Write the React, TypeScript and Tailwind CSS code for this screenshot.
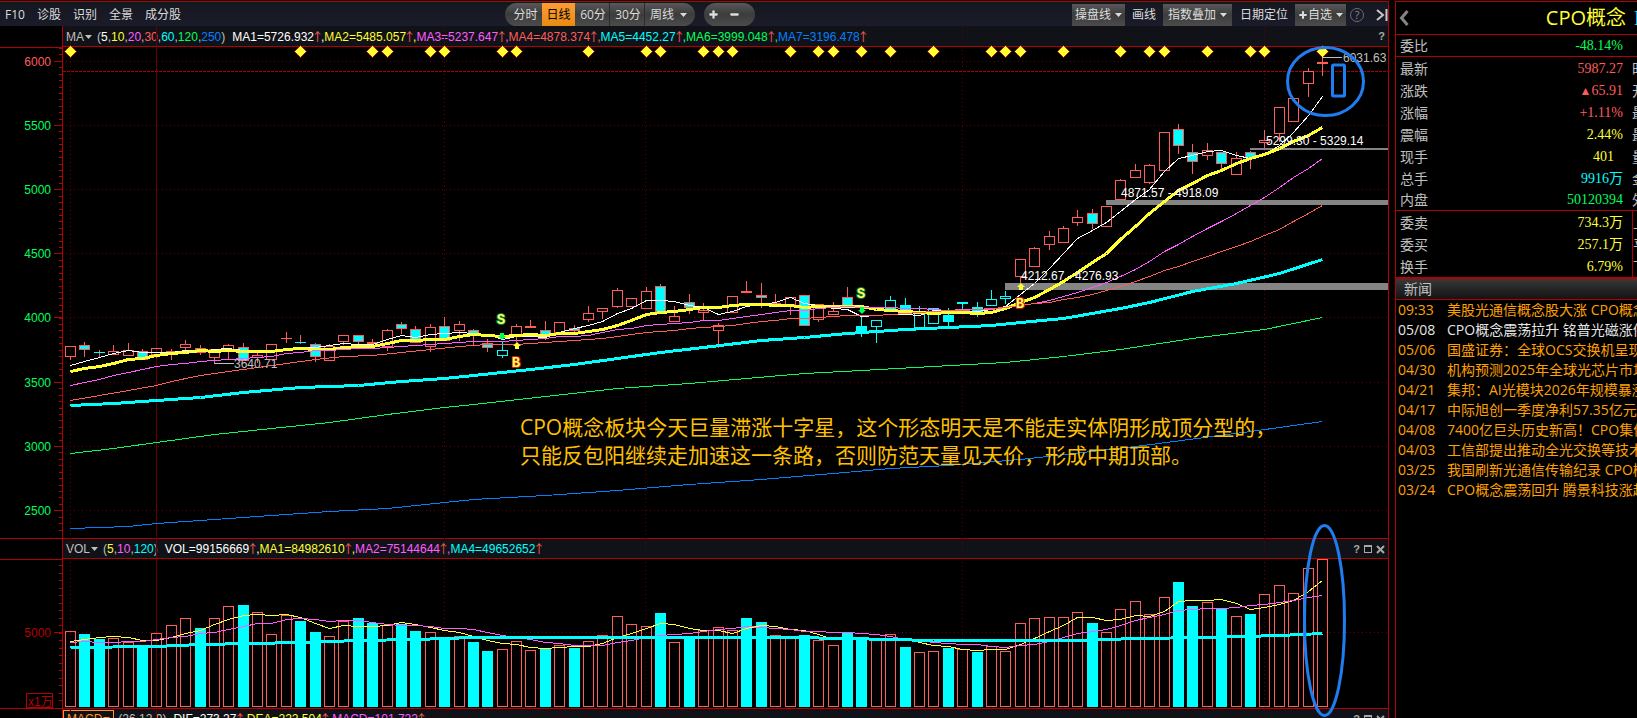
import React from "react";
import { Minus, Plus } from "lucide-react";

// kind: u = hollow red, d = filled cyan with red edge, c = solid cyan, h = hollow cyan
// [kind, body top, body bottom, high, low, volume top, volume filled]
type Candle = [string, number, number, number, number, number, number];

const candles: Candle[] = [
  ["u", 346, 356, 346, 359, 631, 0],
  ["d", 345, 349, 342, 356, 634, 1],
  ["d", 352, 352, 350, 357, 639, 1],
  ["u", 351, 354, 345, 354, 638, 0],
  ["u", 350, 355, 343, 355, 642, 0],
  ["d", 351, 359, 349, 359, 646, 1],
  ["u", 348, 354, 348, 357, 633, 0],
  ["u", 351, 353, 349, 359, 625, 0],
  ["u", 344, 347, 340, 351, 618, 0],
  ["d", 348, 352, 345, 354, 628, 1],
  ["u", 349, 357, 349, 363, 618, 0],
  ["u", 345, 351, 344, 359, 606, 0],
  ["d", 347, 360, 343, 360, 605, 1],
  ["u", 355, 357, 350, 362, 612, 0],
  ["u", 344, 359, 344, 359, 634, 0],
  ["u", 338, 338, 332, 342, 615, 0],
  ["d", 342, 342, 335, 343, 621, 1],
  ["d", 344, 356, 343, 361, 632, 1],
  ["u", 346, 360, 344, 360, 636, 0],
  ["u", 335, 341, 335, 344, 621, 0],
  ["d", 335, 341, 335, 344, 618, 1],
  ["u", 342, 343, 339, 346, 623, 1],
  ["u", 330, 346, 329, 350, 625, 0],
  ["d", 324, 328, 322, 333, 624, 1],
  ["d", 329, 342, 326, 342, 631, 1],
  ["u", 327, 346, 324, 351, 632, 0],
  ["d", 326, 340, 317, 340, 637, 1],
  ["u", 324, 330, 321, 340, 636, 0],
  ["d", 330, 333, 329, 344, 642, 1],
  ["d", 343, 347, 339, 351, 651, 1],
  ["h", 350, 355, 341, 357, 649, 0],
  ["u", 326, 336, 324, 341, 641, 0],
  ["u", 326, 327, 320, 327, 650, 0],
  ["d", 330, 334, 321, 339, 648, 1],
  ["u", 322, 332, 322, 332, 645, 0],
  ["d", 328, 330, 325, 332, 648, 1],
  ["u", 313, 319, 306, 321, 641, 0],
  ["u", 308, 311, 308, 318, 635, 0],
  ["u", 290, 306, 288, 307, 616, 0],
  ["u", 298, 306, 298, 306, 624, 0],
  ["u", 291, 308, 287, 308, 626, 0],
  ["d", 286, 311, 284, 311, 613, 1],
  ["u", 316, 321, 306, 321, 642, 0],
  ["d", 302, 307, 294, 313, 637, 1],
  ["u", 310, 312, 303, 320, 630, 0],
  ["u", 325, 330, 323, 347, 627, 0],
  ["u", 296, 312, 296, 312, 630, 0],
  ["u", 291, 292, 281, 292, 618, 1],
  ["d", 295, 297, 283, 307, 622, 1],
  ["u", 303, 304, 294, 304, 635, 0],
  ["u", 297, 304, 297, 314, 638, 0],
  ["d", 295, 325, 295, 325, 635, 1],
  ["u", 304, 319, 304, 321, 640, 0],
  ["u", 311, 314, 302, 314, 645, 0],
  ["d", 297, 306, 287, 306, 633, 1],
  ["c", 326, 332, 315, 336, 638, 1],
  ["h", 320, 326, 320, 342, 640, 0],
  ["h", 300, 308, 296, 308, 634, 0],
  ["c", 305, 311, 298, 313, 647, 1],
  ["h", 311, 327, 306, 327, 652, 0],
  ["h", 308, 323, 308, 323, 651, 0],
  ["c", 315, 321, 308, 325, 648, 1],
  ["c", 302, 303, 302, 312, 649, 0],
  ["c", 307, 313, 302, 316, 652, 1],
  ["h", 299, 305, 290, 305, 646, 0],
  ["h", 296, 298, 291, 303, 651, 0],
  ["u", 259, 276, 259, 282, 623, 0],
  ["u", 248, 266, 247, 266, 618, 0],
  ["u", 236, 244, 231, 249, 617, 0],
  ["u", 228, 242, 226, 242, 617, 0],
  ["u", 217, 222, 210, 225, 612, 0],
  ["d", 213, 223, 209, 228, 623, 1],
  ["u", 206, 226, 206, 226, 632, 0],
  ["u", 180, 199, 179, 199, 609, 0],
  ["u", 170, 177, 164, 177, 601, 0],
  ["u", 165, 182, 164, 183, 614, 0],
  ["u", 132, 170, 132, 170, 597, 0],
  ["d", 129, 145, 124, 153, 582, 1],
  ["d", 152, 161, 144, 173, 606, 1],
  ["u", 150, 155, 143, 159, 602, 0],
  ["d", 152, 163, 152, 168, 609, 1],
  ["u", 158, 174, 152, 174, 616, 0],
  ["d", 152, 157, 151, 168, 614, 1],
  ["u", 140, 142, 130, 147, 594, 0],
  ["u", 107, 133, 107, 141, 585, 0],
  ["u", 98, 121, 98, 121, 593, 0],
  ["u", 71, 83, 68, 96, 568, 0],
  ["u", 62, 63, 46, 75, 559, 0],
];

const xAt = (i: number) => Math.round(70 + 14.39 * i);

const closes = candles.map((c) => (c[0] === "u" || c[0] === "h" ? c[1] : c[2]));
const volumes = candles.map((c) => c[5]);

const average = (values: number[], n: number, seed: number[]) =>
  values.map((_, i) =>
    i < seed.length
      ? seed[i]
      : values.slice(i - n + 1, i + 1).reduce((a, b) => a + b, 0) / n,
  );

const toPoints = (ys: number[], from = 0) =>
  ys.map((y, i) => `${xAt(i + from)},${Math.round(y)}`).join(" ");

const sparse = (pts: number[][]) =>
  pts.map(([i, y]) => `${xAt(i)},${Math.round(y)}`).join(" ");

const ma5 = toPoints(average(closes, 5, [365, 361, 357, 353]));
const ma10 = toPoints(
  average(closes, 10, [371, 368, 366, 363, 359, 358, 355, 353, 352]),
);
const ma20 = toPoints(
  average(closes, 20, [
    385, 382, 379, 375, 372, 369, 366, 364, 363, 361, 360, 359, 358, 357, 356,
    353, 352, 350, 350,
  ]),
);
const ma30 =
  sparse([
    [0, 400], [2, 395], [4, 390], [6, 385], [7, 381], [9, 375], [11, 371],
    [13, 367], [15, 363], [17, 359], [19, 356], [21, 355], [23, 352],
    [25, 349], [27, 346],
  ]) +
  " " +
  toPoints(average(closes, 30, closes.slice(0, 29)).slice(29), 29);
const ma60 = sparse([
  [0, 405], [3, 403], [6, 400], [9, 397], [12, 392], [16, 387], [20, 385],
  [23, 381], [26, 378], [28, 375], [32, 369], [35, 364], [38, 358], [41, 352],
  [44, 347], [48, 340], [51, 337], [54, 333], [58, 329], [61, 327], [64, 325],
  [66, 322], [69, 318], [73, 308], [75, 302], [78, 291], [81, 283], [84, 273],
  [87, 259],
]);
const ma120 = sparse([
  [0, 453], [3, 448], [6, 442], [10, 434], [14, 428], [18, 422], [22, 414],
  [26, 407], [28, 404], [33, 396], [38, 388], [43, 383], [47, 378], [51, 373],
  [55, 370], [60, 366], [65, 362], [69, 356], [73, 349], [78, 338], [83, 329],
  [87, 317],
]);
const ma250 = sparse([
  [0, 528], [4, 526], [6, 523], [10, 519], [14, 515], [18, 511], [22, 508],
  [26, 502], [28, 499], [33, 495], [38, 490], [43, 484], [48, 479], [53, 473],
  [57, 468], [61, 465], [66, 459], [74, 446], [82, 431], [87, 421],
]);
const vol5 = toPoints(average(volumes, 5, [641, 639, 637, 636]));
const vol10 = toPoints(
  average(volumes, 10, [642, 641, 642, 642, 641, 641, 639, 637, 636]),
);
const vol120 = sparse([
  [0, 647], [6, 646], [9, 644], [16, 642], [20, 640], [24, 639], [28, 637],
  [50, 637], [54, 638], [60, 640], [70, 640], [74, 638], [79, 637], [84, 635],
  [87, 633],
]);

const signals = [
  0, 16, 21, 22, 25, 26, 30, 31, 36, 40, 41, 44, 45, 46, 50, 52, 53, 55, 57,
  60, 64, 65, 66, 69, 73, 75, 76, 79, 82, 83, 87,
];

const range = (n: number) => Array.from({ length: n }, (_, i) => i);

const gridColumns = [70, 444, 645, 962, 1264];

const priceLabels = [
  { text: "6000", y: 61, up: true },
  { text: "5500", y: 125 },
  { text: "5000", y: 189 },
  { text: "4500", y: 253 },
  { text: "4000", y: 317 },
  { text: "3500", y: 382 },
  { text: "3000", y: 446 },
  { text: "2500", y: 510 },
];

const gaps = [
  { x: 1250, y: 148, h: 2, tx: 1266, ty: 145, text: "5299.30 - 5329.14" },
  { x: 1106, y: 200, h: 5, tx: 1121, ty: 197, text: "4871.57 - 4918.09" },
  { x: 1005, y: 283, h: 7, tx: 1021, ty: 280, text: "4212.67 - 4276.93" },
];

function Line({ points, color, width = 1 }: { points: string; color: string; width?: number }) {
  return (
    <polyline
      points={points}
      transform="translate(0.5 0.5)"
      fill="none"
      stroke={color}
      strokeWidth={width}
      shapeRendering="crispEdges"
    />
  );
}

function CandleShape({ candle, i }: { candle: Candle; i: number }) {
  const [kind, top, bottom, high, low] = candle;
  const x = xAt(i);
  const edge = kind === "u" || kind === "d" ? "#ff5c5c" : "#00ffff";
  const fill = kind === "d" || kind === "c" ? "#00ffff" : "none";
  const flat = bottom - top < 1;
  return (
    <g shapeRendering="crispEdges" stroke={edge}>
      {high < top && <path d={`M${x + 0.5} ${high}V${top}`} />}
      {low > bottom && <path d={`M${x + 0.5} ${bottom}V${low + 1}`} />}
      {flat ? (
        <path d={`M${x - 5} ${top + 0.5}H${x + 6}`} stroke={kind === "d" ? "#00ffff" : edge} />
      ) : (
        <rect x={x - 4.5} y={top + 0.5} width="10" height={bottom - top} fill={fill} />
      )}
    </g>
  );
}

function Mark({ x, y, letter }: { x: number; y: number; letter: string }) {
  const sell = letter === "S";
  return (
    <text
      x={x}
      y={y}
      textAnchor="middle"
      className="font-['Liberation_Mono',monospace] text-sm font-bold"
      fill="#ffff5c"
      stroke={sell ? "#00783c" : "#c81414"}
      strokeWidth="2"
      paintOrder="stroke"
    >
      {letter}
    </text>
  );
}

function Arrow({ x, y, up }: { x: number; y: number; up?: boolean }) {
  return up ? (
    <path d={`M${x} ${y}l4 4h-2v3h-4v-3h-2z`} fill="#ffff32" />
  ) : (
    <path d={`M${x} ${y + 7}l4 -4h-2v-3h-4v3h-2z`} fill="#00ff5c" />
  );
}

function PriceChart() {
  return (
    <svg
      viewBox="0 46 1389 492"
      className="relative block w-full overflow-visible font-['Liberation_Sans',Arial,sans-serif] text-xs"
    >
      <g shapeRendering="crispEdges" fill="none">
        <path d="M156.5 26V538" stroke="#640000" />
        {gridColumns.map((x) => (
          <path key={x} d={`M${x + 0.5} 26V538`} stroke="#640000" strokeDasharray="1 3" />
        ))}
        {priceLabels.map((l) => (
          <path key={l.y} d={`M66 ${l.y + 0.5}H1388`} stroke="#640000" strokeDasharray="1 3" />
        ))}
        <path d="M63 71.5H1388" stroke="#aa0000" strokeDasharray="3 1" />
        <path d="M62.5 26V538M63 46.5H1389M0 47.5H62M1388.5 2V538" stroke="#b40000" />
        {range(76).map((i) => (
          <path
            key={i}
            d={`M${59} ${Math.round(48 + i * 6.42) + 0.5}H62`}
            stroke="#b40000"
          />
        ))}
        {priceLabels.map((l) => (
          <path key={l.y} d={`M54 ${l.y + 0.5}H62`} stroke="#b40000" />
        ))}
      </g>
      {priceLabels.map((l) => (
        <text key={l.y} x="51" y={l.y + 5} textAnchor="end" fill={l.up ? "#ff5c5c" : "#00ff5c"}>
          {l.text}
        </text>
      ))}
      {gaps.map((g) => (
        <rect key={g.x} x={g.x} y={g.y} width={1388 - g.x} height={g.h} fill="#848484" />
      ))}
      {candles.map((c, i) => (
        <CandleShape key={i} candle={c} i={i} />
      ))}
      <Line points={ma5} color="#ffffff" />
      <Line points={ma10} color="#ffff32" width={3} />
      <Line points={ma20} color="#ff5cff" />
      <Line points={ma30} color="#ff5c5c" />
      <Line points={ma60} color="#00ffff" width={3} />
      <Line points={ma120} color="#00ff5c" />
      <Line points={ma250} color="#0080ff" />
      {gaps.map((g) => (
        <text key={g.x} x={g.tx} y={g.ty} fill="#ffffff">
          {g.text}
        </text>
      ))}
      {signals.map((i) => (
        <path
          key={i}
          d={`M${xAt(i) + 0.5} 45.500l6 6l-6 6l-6 -6z`}
          fill="#ffff32"
          stroke="#b40000"
          strokeWidth="0.7"
        />
      ))}
      <g stroke="#c0c0c0" shapeRendering="crispEdges">
        <path d="M1322 57.5H1342M214 363.5H234" />
      </g>
      <g fill="#c0c0c0">
        <text x="1343" y="62">6031.63</text>
        <text x="234" y="368">3640.71</text>
      </g>
      <Mark x={501} y={324} letter="S" />
      <Arrow x={502} y={333} />
      <Arrow x={517} y={342} up />
      <Mark x={516} y={367} letter="B" />
      <Mark x={861} y={298} letter="S" />
      <Arrow x={862} y={307} />
      <Arrow x={1021} y={283} up />
      <Mark x={1020} y={308} letter="B" />
      <g fill="none" stroke="#1f7df0" strokeWidth="3">
        <ellipse cx="1325.5" cy="81.5" rx="38" ry="34" />
        <rect x="1332.5" y="65" width="12" height="31" rx="1" />
      </g>
      <g
        fill="#ffc000"
        className="font-['Open_Sans','Noto_Sans_CJK_SC',sans-serif] text-[21px]"
      >
        <text x="520" y="435">CPO概念板块今天巨量滞涨十字星，这个形态明天是不能走实体阴形成顶分型的，</text>
        <text x="520" y="463">只能反包阳继续走加速这一条路，否则防范天量见天价，形成中期顶部。</text>
      </g>
    </svg>
  );
}

function VolumeChart() {
  return (
    <svg
      viewBox="0 558 1389 150"
      className="relative block w-full overflow-visible font-['Liberation_Sans','Noto_Sans_CJK_SC',sans-serif] text-xs"
    >
      <g shapeRendering="crispEdges" fill="none">
        <path d="M156.5 538V718" stroke="#640000" />
        {gridColumns.map((x) => (
          <path key={x} d={`M${x + 0.5} 538V718`} stroke="#640000" strokeDasharray="1 3" />
        ))}
        <path d="M66 632.5H1388" stroke="#640000" strokeDasharray="1 3" />
        <path d="M62.5 538V718M63 558.5H1389M0 559.5H62M1388.5 538V718" stroke="#b40000" />
        {range(19).map((i) => (
          <path key={i} d={`M59 ${Math.round(565 + i * 7.5) + 0.5}H62`} stroke="#b40000" />
        ))}
        <path d="M54 632.5H62" stroke="#b40000" />
        <rect x="26.5" y="693.5" width="26" height="14" stroke="#b40000" />
      </g>
      <g fill="#b40000">
        <text x="51" y="637" textAnchor="end">5000</text>
        <text x="28" y="706">x1万</text>
      </g>
      <g shapeRendering="crispEdges">
        {candles.map((c, i) =>
          c[6] ? (
            <rect key={i} x={xAt(i) - 5} y={c[5]} width="11" height={707 - c[5]} fill="#00ffff" />
          ) : (
            <rect
              key={i}
              x={xAt(i) - 4.5}
              y={c[5] + 0.5}
              width="10"
              height={706 - c[5]}
              fill="none"
              stroke="#ff5c5c"
            />
          ),
        )}
      </g>
      <Line points={vol5} color="#ffff32" />
      <Line points={vol10} color="#ff5cff" />
      <Line points={vol120} color="#00ffff" width={3} />
      <ellipse cx="1324.5" cy="620.5" rx="20" ry="95" fill="none" stroke="#1f7df0" strokeWidth="3" />
    </svg>
  );
}

function Caret() {
  return (
    <svg viewBox="0 0 7 4" className="h-1 w-[7px] shrink-0" fill="currentColor">
      <path d="M0 0h7L3.500 4z" />
    </svg>
  );
}

function Up() {
  return (
    <span className="flex w-[7px] justify-center font-['Noto_Sans_CJK_SC',sans-serif] leading-4 text-[#ff5c5c]">
      ↑
    </span>
  );
}

interface Reading {
  text: string;
  color: string;
}

interface IndicatorBarProps {
  name: string;
  params: Reading[];
  readings: Reading[];
  active?: boolean;
  tools?: boolean;
}

const IndicatorBar: React.FC<IndicatorBarProps> = ({ name, params, readings, active, tools }) => {
  return (
    <div className="ml-[62px] flex h-full items-center bg-[#111217] pt-px pr-1 font-['Liberation_Sans',Arial,sans-serif] text-xs text-[#c0c0c0]">
      <button
        className={
          active
            ? "ml-px flex h-full items-center gap-px border border-[#ff9628] px-[3px] text-[#ff9628]"
            : "flex h-full items-center gap-px pl-1"
        }
      >
        {name}
        <Caret />
      </button>
      <div className={active ? "ml-1 flex" : "ml-[5px] flex"}>
        (
        {params.map((p, i) => (
          <React.Fragment key={p.text}>
            {i > 0 && ","}
            <span className={p.color}>{p.text}</span>
          </React.Fragment>
        ))}
        )
      </div>
      <div className="ml-[7px] flex">
        {readings.map((r, i) => (
          <span key={r.text} className={`flex ${r.color}`}>
            {r.text}
            <Up />
            {i < readings.length - 1 && ","}
          </span>
        ))}
      </div>
      <div className="ml-auto flex items-center gap-1 text-[#a8a8a8]">
        <button aria-label="帮助" className="text-[11px] font-bold">?</button>
        {tools && (
          <>
            <button aria-label="最大化" className="size-2 border border-t-2 border-[#a8a8a8]" />
            <button aria-label="关闭">
              <svg viewBox="0 0 9 9" className="size-[9px]" stroke="currentColor" strokeWidth="2">
                <path d="M1 1l7 7M8 1l-7 7" />
              </svg>
            </button>
          </>
        )}
      </div>
    </div>
  );
};

function Toolbar() {
  return (
    <div className="flex h-[25px] items-end justify-between border-t border-[#b40000] bg-linear-to-b from-[#14161f] to-[#1b1c2a] text-xs text-[#dcdcdc]">
      <nav className="flex h-[23px] w-[505px] shrink-0 items-center gap-3 pl-[5px]">
        <button>F10</button>
        <button>诊股</button>
        <button>识别</button>
        <button>全景</button>
        <button>成分股</button>
      </nav>
      <div className="flex h-[23px] gap-[9px]">
        <div className="flex overflow-hidden rounded-full bg-linear-to-b from-[#585858] via-[#3c3c3c] to-[#4c4c4c]">
          <button className="w-[37px] pl-1">分时</button>
          <button className="w-[33px] bg-linear-to-b from-[#ff9c30] to-[#e88a10] text-black">日线</button>
          <button className="w-[35px] border-r border-[#2c2c2c] pl-0.5">60分</button>
          <button className="w-[35px] border-r border-[#2c2c2c] pl-0.5">30分</button>
          <button className="flex w-[50px] items-center gap-[6px] pl-[5px]">
            周线
            <Caret />
          </button>
        </div>
        <div className="flex w-[51px] items-center gap-[10px] rounded-full bg-linear-to-b from-[#585858] via-[#3c3c3c] to-[#4c4c4c] pl-1">
          <button aria-label="放大">
            <Plus className="size-[11px]" strokeWidth={5} />
          </button>
          <button aria-label="缩小">
            <Minus className="size-[11px]" strokeWidth={5} />
          </button>
        </div>
      </div>
      <div className="ml-auto flex h-[22px] items-center pr-px">
        <button className="mr-[7px] flex h-full items-center gap-1 bg-linear-to-b from-[#585858] via-[#3c3c3c] to-[#4c4c4c] px-[3px]">
          操盘线
          <Caret />
        </button>
        <button className="mr-[7px]">画线</button>
        <button className="mr-2 flex h-full items-center gap-1 bg-linear-to-b from-[#585858] via-[#3c3c3c] to-[#4c4c4c] px-[5px]">
          指数叠加
          <Caret />
        </button>
        <button className="mr-[7px]">日期定位</button>
        <button className="mr-1 flex h-full items-center gap-1 bg-linear-to-b from-[#585858] via-[#3c3c3c] to-[#4c4c4c] px-[3px]">
          <span className="flex items-center">
            <Plus className="size-[10px]" strokeWidth={5} />
            自选
          </span>
          <Caret />
        </button>
        <button
          aria-label="帮助"
          className="mr-3 flex size-[14px] items-center justify-center rounded-full border border-[#6c6c78] text-[11px] text-[#8c8c98]"
        >
          ?
        </button>
        <button aria-label="收起">
          <svg viewBox="0 0 12 12" className="size-3" fill="none" stroke="#c8c8c8" strokeWidth="2">
            <path d="M1 1l6 5l-6 5M10.500 0v12" />
          </svg>
        </button>
      </div>
    </div>
  );
}

const quotes = [
  { label: "最新", value: "5987.27", color: "text-[#ff5c5c]", next: "时" },
  { label: "涨跌", value: "65.91", color: "text-[#ff5c5c]", next: "开", rise: true },
  { label: "涨幅", value: "+1.11%", color: "text-[#ff5c5c]", next: "最" },
  { label: "震幅", value: "2.44%", color: "text-[#ffff32]", next: "最" },
  { label: "现手", value: "401", color: "text-[#ffff32]", next: "量", inset: true },
  { label: "总手", value: "9916万", color: "text-[#00ffff]", next: "金" },
  { label: "内盘", value: "50120394", color: "text-[#00ff5c]", next: "外" },
];

const orders = [
  { label: "委卖", value: "734.3万", color: "text-[#ffff32]", next: "上" },
  { label: "委买", value: "257.1万", color: "text-[#ffff32]", next: "平" },
  { label: "换手", value: "6.79%", color: "text-[#ffff32]", next: "下" },
];

const news = [
  { date: "09:33", title: "美股光通信概念股大涨 CPO概念" },
  { date: "05/08", title: "CPO概念震荡拉升 铭普光磁涨停", read: true },
  { date: "05/06", title: "国盛证券：全球OCS交换机呈现" },
  { date: "04/30", title: "机构预测2025年全球光芯片市场" },
  { date: "04/21", title: "集邦：AI光模块2026年规模暴涨" },
  { date: "04/17", title: "中际旭创一季度净利57.35亿元" },
  { date: "04/08", title: "7400亿巨头历史新高！CPO集体" },
  { date: "04/03", title: "工信部提出推动全光交换等技术" },
  { date: "03/25", title: "我国刷新光通信传输纪录 CPO概" },
  { date: "03/24", title: "CPO概念震荡回升 腾景科技涨超" },
];

interface QuoteProps {
  label: string;
  value: string;
  color: string;
  next?: string;
  rise?: boolean;
  inset?: boolean;
}

const QuoteRow: React.FC<QuoteProps> = ({ label, value, color, next, rise, inset }) => {
  return (
    <tr className="h-[22px] border-[#b40000] leading-[21px]">
      <th className="w-[60px] border-inherit p-0 pl-1 text-left font-normal text-[#c0c0c0]">{label}</th>
      <td
        className={`border-inherit py-0 text-right font-['Liberation_Serif','Noto_Sans_CJK_SC',serif] ${color} ${inset ? "pr-[18px]" : "pr-[9px]"}`}
      >
        {rise && <span className="text-xs">▲</span>}
        {value}
      </td>
      <td className="w-[5px] overflow-hidden border-inherit p-0 whitespace-nowrap text-[#c0c0c0]">
        {next}
      </td>
    </tr>
  );
};

function Sidebar() {
  return (
    <aside className="w-[242px] shrink-0 overflow-hidden border-l border-[#b40000] text-sm">
      <div className="flex h-[34px] items-center border-y border-[#b40000]">
        <button aria-label="返回" className="pl-[3px]">
          <svg viewBox="0 0 10 16" className="h-4 w-2.5" fill="none" stroke="#848484" strokeWidth="3">
            <path d="M8.500 1L2.500 8l6 7" />
          </svg>
        </button>
        <h1 className="ml-auto shrink-0 pr-2 text-xl text-[#ffff32]">CPO概念</h1>
        <span className="w-[3px] overflow-hidden font-['Liberation_Serif',serif] text-xl text-[#00ffff]">I</span>
      </div>
      <table className="w-full table-fixed border-separate border-spacing-0">
        <tbody className="[&>tr:last-child>*]:border-b">
          <QuoteRow label="委比" value="-48.14%" color="text-[#00ff5c]" />
        </tbody>
        <tbody className="[&>tr:last-child>*]:border-b">
          {quotes.map((q) => (
            <QuoteRow key={q.label} {...q} />
          ))}
        </tbody>
        <tbody className="[&_td:last-child]:border-l">
          {orders.map((q) => (
            <QuoteRow key={q.label} {...q} />
          ))}
        </tbody>
      </table>
      <h2 className="h-[23px] border-t-2 border-b border-[#b40000] bg-linear-to-b from-[#383838] to-[#141414] pl-2 leading-5 text-[#c0c0c0]">
        新闻
      </h2>
      <ul>
        {news.map((n) => (
          <li key={n.date}>
            <a
              href="#"
              className={`flex h-5 items-center whitespace-nowrap pl-0.5 ${n.read ? "text-[#e6e6e6]" : "text-[#ffa000]"}`}
            >
              <span className="w-[49px] shrink-0">{n.date}</span>
              {n.title}
            </a>
          </li>
        ))}
      </ul>
    </aside>
  );
}

export default function App() {
  return (
    <div className="flex h-screen gap-[6px] overflow-hidden bg-black pt-px font-['Open_Sans','Noto_Sans_CJK_SC',sans-serif]">
      <main className="min-w-0 flex-1">
        <Toolbar />
        <div className="h-5">
          <IndicatorBar
            name="MA"
            params={[
              { text: "5", color: "text-white" },
              { text: "10", color: "text-[#ffff32]" },
              { text: "20", color: "text-[#ff5cff]" },
              { text: "30", color: "text-[#ff5c5c]" },
              { text: "60", color: "text-[#00ffff]" },
              { text: "120", color: "text-[#00ff5c]" },
              { text: "250", color: "text-[#0080ff]" },
            ]}
            readings={[
              { text: "MA1=5726.932", color: "text-white" },
              { text: "MA2=5485.057", color: "text-[#ffff32]" },
              { text: "MA3=5237.647", color: "text-[#ff5cff]" },
              { text: "MA4=4878.374", color: "text-[#ff5c5c]" },
              { text: "MA5=4452.27", color: "text-[#00ffff]" },
              { text: "MA6=3999.048", color: "text-[#00ff5c]" },
              { text: "MA7=3196.478", color: "text-[#0080ff]" },
            ]}
          />
        </div>
        <PriceChart />
        <div className="h-5 border-t border-[#b40000]">
          <IndicatorBar
            name="VOL"
            tools
            params={[
              { text: "5", color: "text-[#ffff32]" },
              { text: "10", color: "text-[#ff5cff]" },
              { text: "120", color: "text-[#00ffff]" },
            ]}
            readings={[
              { text: "VOL=99156669", color: "text-white" },
              { text: "MA1=84982610", color: "text-[#ffff32]" },
              { text: "MA2=75144644", color: "text-[#ff5cff]" },
              { text: "MA4=49652652", color: "text-[#00ffff]" },
            ]}
          />
        </div>
        <VolumeChart />
        <div className="h-5 border-t border-[#b40000]">
          <IndicatorBar
            name="MACD"
            active
            tools
            params={[{ text: "26,12,9", color: "text-[#c0c0c0]" }]}
            readings={[
              { text: "DIF=273.27", color: "text-white" },
              { text: "DEA=222.504", color: "text-[#ffff32]" },
              { text: "MACD=101.722", color: "text-[#ff5cff]" },
            ]}
          />
        </div>
      </main>
      <Sidebar />
    </div>
  );
}
